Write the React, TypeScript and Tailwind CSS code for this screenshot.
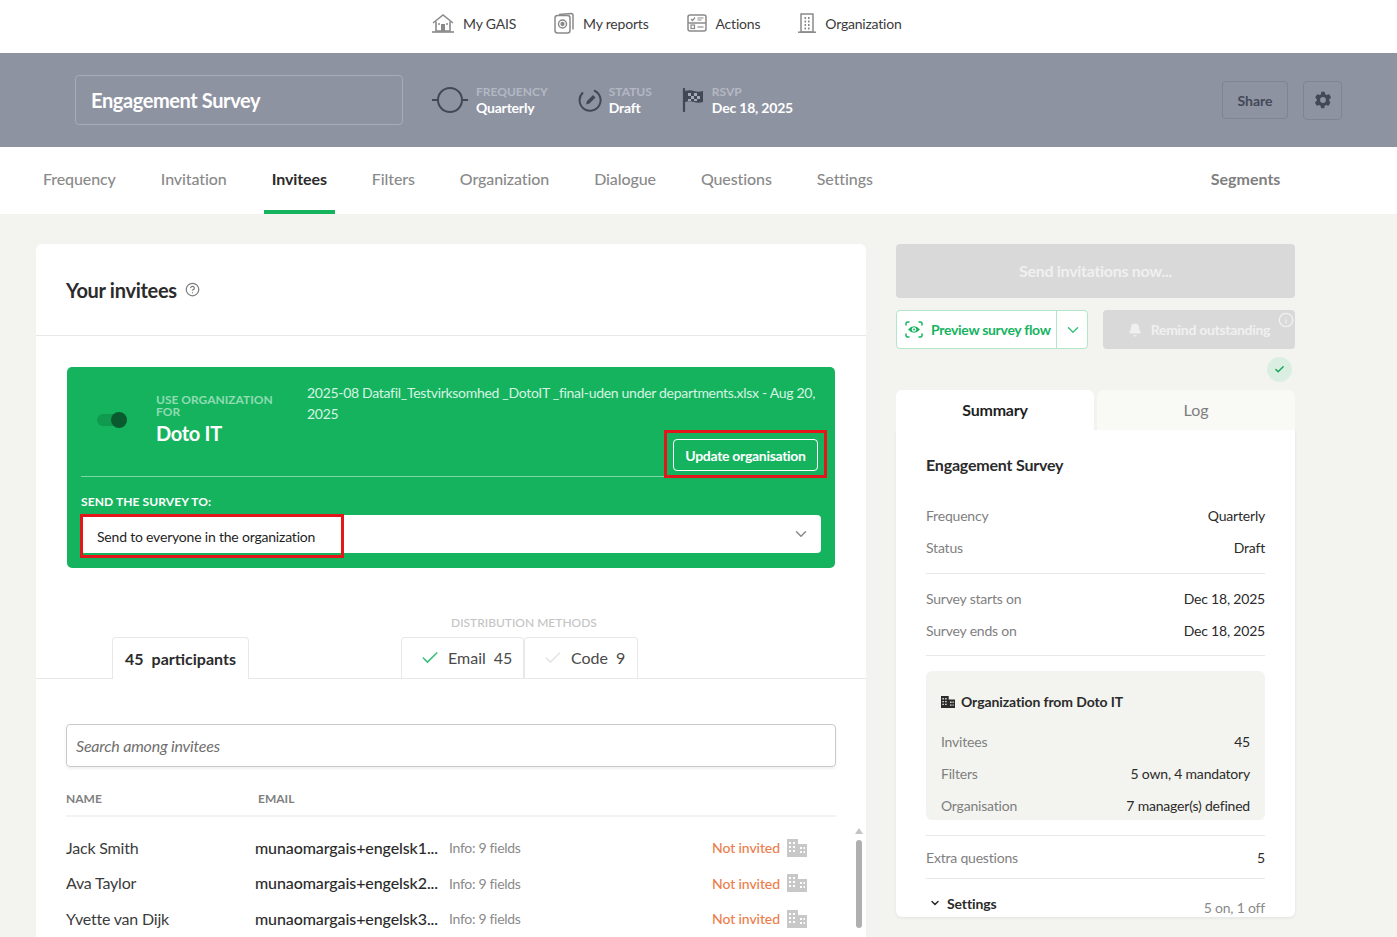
import { Bell, ChevronDown, Check, CircleHelp, Info } from "lucide-react";

const font = "font-['Lato','Liberation_Sans',sans-serif]";

// Icons drawn by hand, the packages have nothing close enough
const HomeIcon = () => (
  <svg width="22" height="20" viewBox="0 0 22 20" fill="none" stroke="#8a8a8a" strokeWidth="1.6">
    <path d="M1 10 11 2l10 8" />
    <path d="M4 8.5V18h14V8.5" />
    <rect x="9" y="11" width="4" height="7" fill="#8a8a8a" stroke="none" />
    <path d="M0 19h22" />
    <path d="M6 11h2M14 11h2" />
  </svg>
);

const ReportsIcon = () => (
  <svg width="20" height="22" viewBox="0 0 20 22" fill="none" stroke="#8a8a8a" strokeWidth="1.5">
    <path d="M5 2.5 17 1.5q2 0 2 2v14" />
    <rect x="1" y="3.5" width="15" height="17.5" rx="2.5" />
    <circle cx="8.5" cy="12" r="4" />
    <circle cx="8.5" cy="12" r="1.4" fill="#8a8a8a" />
  </svg>
);

const ActionsIcon = () => (
  <svg width="20" height="18" viewBox="0 0 20 18" fill="none" stroke="#8a8a8a" strokeWidth="1.5">
    <rect x="1" y="1" width="18" height="16" rx="2" />
    <path d="M1 9h18" />
    <path d="M4 5l1.5 1.5L8 3.5M10.5 4h6M10.5 6h4" strokeWidth="1.2" />
    <rect x="4" y="11" width="3.5" height="3.5" strokeWidth="1.2" />
    <path d="M10.5 13h6" strokeWidth="1.2" />
  </svg>
);

const OrgNavIcon = () => (
  <svg width="18" height="20" viewBox="0 0 18 20" fill="none" stroke="#8a8a8a" strokeWidth="1.5">
    <rect x="3" y="1" width="12" height="18" />
    <path d="M0 19.2h18" />
    <path d="M6.5 5h1.6M10 5h1.6M6.5 8.5h1.6M10 8.5h1.6M6.5 12h1.6M10 12h1.6M6.5 15.500h1.6M10 15.500h1.6" strokeWidth="1.8" />
  </svg>
);

const FrequencyIcon = () => (
  <svg width="36" height="28" viewBox="0 0 36 28" fill="none" stroke="#434857" strokeWidth="2">
    <circle cx="18" cy="14" r="12" />
    <path d="M0 14h6M30 14h6" />
  </svg>
);

const StatusIcon = () => (
  <svg width="24" height="24" viewBox="0 0 24 24" fill="none" stroke="#434857" strokeWidth="2">
    <path d="M16 2.500A10.500 10.500 0 1 1 5 4.500" />
    <path d="M8 16.500l1-3.500 6-6 2.500 2.500-6 6z" fill="#434857" stroke="none" />
  </svg>
);

const FlagIcon = () => (
  <svg width="22" height="24" viewBox="0 0 22 24">
    <path d="M2 1v22" stroke="#434857" strokeWidth="2.200" strokeLinecap="round" />
    <path d="M3 3q5-1.500 9 0t9 0v11q-5 1.500-9 0t-9 0z" fill="#434857" />
    <path d="M6 5h3v3H6zM12 5h3v3h-3zM9 8h3v3H9zM15 8h3v3h-3zM6 11h3v2H6zM12 11h3v2h-3z" fill="#a5a9b5" />
  </svg>
);

const GearIcon = () => (
  <svg width="20" height="20" viewBox="0 0 24 24" fill="#434857">
    <path d="M19.400 13c.1-.3.100-.7.100-1s0-.7-.1-1l2.100-1.600c.2-.2.300-.4.100-.7l-2-3.400c-.1-.2-.4-.3-.6-.2l-2.500 1c-.5-.4-1.100-.7-1.700-1L14 2.400c0-.2-.2-.4-.5-.4h-3c-.3 0-.5.200-.5.400l-.4 2.700c-.6.300-1.200.6-1.700 1l-2.500-1c-.2-.1-.5 0-.6.200l-2 3.400c-.1.300-.1.500.1.700L4.600 11c0 .3-.1.700-.1 1s0 .7.100 1l-2.100 1.600c-.2.200-.3.400-.1.700l2 3.400c.1.200.4.300.6.200l2.500-1c.5.4 1.100.7 1.700 1l.4 2.700c0 .2.200.4.500.4h3c.3 0 .5-.2.500-.4l.4-2.700c.6-.3 1.200-.6 1.700-1l2.500 1c.2.100.5 0 .6-.2l2-3.400c.1-.3.100-.5-.1-.7zM12 15.500a3.500 3.500 0 1 1 0-7 3.500 3.500 0 0 1 0 7z" />
  </svg>
);

const EyeIcon = () => (
  <svg width="18" height="17" viewBox="0 0 18 17" fill="none" stroke="#16b35f" strokeWidth="1.500">
    <path d="M1 4.500V2.500q0-1.500 1.500-1.500h2M13.500 1h2Q17 1 17 2.500v2M17 12.500v2q0 1.500-1.500 1.500h-2M4.500 16h-2Q1 16 1 14.500v-2" />
    <path d="M3 8.500Q9 2 15 8.500 9 15 3 8.500z" fill="#16b35f" stroke="none" />
    <circle cx="9" cy="8.500" r="2.200" fill="#fff" stroke="none" />
    <circle cx="9" cy="8.500" r="1" fill="#16b35f" stroke="none" />
  </svg>
);

const BuildingIcon = ({ color, size = 20 }: { color: string; size?: number }) => (
  <svg width={size} height={(size * 18) / 20} viewBox="0 0 20 18" fill={color}>
    <path fillRule="evenodd" d="M0 0h11v5h9v13H0zM2 3v2h2V3zm4 0v2h2V3zM2 7v2h2V7zm4 0v2h2V7zm7 1v2h2V8zm3.500 0v2h1.500V8zM2 11v2h2v-2zm4 0v2h2v-2zm7 1v2h2v-2zm3.500 0v2h1.500v-2z" />
  </svg>
);

const navItems = [
  { label: "My GAIS", icon: <HomeIcon /> },
  { label: "My reports", icon: <ReportsIcon /> },
  { label: "Actions", icon: <ActionsIcon /> },
  { label: "Organization", icon: <OrgNavIcon /> },
];

const tabs = ["Frequency", "Invitation", "Invitees", "Filters", "Organization", "Dialogue", "Questions", "Settings"];

const invitees = [
  { name: "Jack Smith", email: "munaomargais+engelsk1..." },
  { name: "Ava Taylor", email: "munaomargais+engelsk2..." },
  { name: "Yvette van Dijk", email: "munaomargais+engelsk3..." },
];

function HeaderStat({ icon, label, value, gap }: { icon: React.ReactNode; label: string; value: string; gap: string }) {
  return (
    <div className={`flex items-center ${gap}`}>
      {icon}
      <div className="leading-none">
        <div className="text-[12px] leading-[15px] font-bold text-[#b4b8c3]">{label}</div>
        <div className="text-[14px] leading-[18px] font-bold text-white tracking-[-0.2px]">{value}</div>
      </div>
    </div>
  );
}

function SummaryRow({ label, value, className = "" }: { label: string; value: string; className?: string }) {
  return (
    <div className={`flex justify-between text-[14px] ${className}`}>
      <span className="text-[#7f7f7f] tracking-[-0.2px]">{label}</span>
      <span className="text-[#2b2b2b] tracking-[-0.2px]">{value}</span>
    </div>
  );
}

export default function App() {
  return (
    <div className={`${font} h-[937px] w-[1397px] overflow-hidden bg-[#f3f4ef] text-[#2b2b2b]`}>
      {/* Top nav */}
      <div className="h-[53px] bg-white flex items-center pl-[432px] pb-[7px]">
        {navItems.map((item, i) => (
          <div key={item.label} className={`flex items-center gap-[9px] text-[14px] text-[#3c3c3c] tracking-[-0.2px] ${i < 3 ? "mr-[38px]" : ""}`}>
            {item.icon}
            <span>{item.label}</span>
          </div>
        ))}
      </div>

      {/* Survey header */}
      <div className="h-[94px] bg-[#8e93a2] flex items-center pl-[75px] pr-[55px]">
        <div className="w-[328px] h-[50px] rounded-[4px] border border-[#a8acb8] flex items-center px-[15px] text-[20px] font-bold text-white tracking-[-0.4px] mr-[29px]">
          Engagement Survey
        </div>
        <div className="flex items-center">
          <HeaderStat icon={<FrequencyIcon />} label="FREQUENCY" value="Quarterly" gap="gap-[8px]" />
          <div className="w-[30px]" />
          <HeaderStat icon={<StatusIcon />} label="STATUS" value="Draft" gap="gap-[7px]" />
          <div className="w-[30px]" />
          <HeaderStat icon={<FlagIcon />} label="RSVP" value="Dec 18, 2025" gap="gap-[8px]" />
        </div>
        <div className="ml-auto flex items-center gap-[15px]">
          <div className="w-[66px] h-[38px] rounded-[4px] border border-[#7f8493] flex items-center justify-center text-[14px] font-bold text-[#434857]">
            Share
          </div>
          <div className="w-[39px] h-[39px] rounded-[4px] border border-[#7f8493] flex items-center justify-center">
            <GearIcon />
          </div>
        </div>
      </div>

      {/* Tabs */}
      <div className="h-[67px] bg-white flex pl-[35px] text-[16px] text-[#8a8a8a]">
        {tabs.map((t) => (
          <div
            key={t}
            className={`px-[8px] mr-[29px] flex items-center border-b-[4px] tracking-[-0.1px] ${
              t === "Invitees" ? "border-[#16b35f] text-[#2b2b2b] font-bold" : "border-transparent font-medium"
            }`}
          >
            {t}
          </div>
        ))}
        <div className="ml-[301px] flex items-center pb-[4px] font-bold text-[#7f7f7f]">Segments</div>
      </div>

      <div className="flex pl-[36px] pt-[30px] gap-[30px] items-start">
        {/* Left card */}
        <div className="w-[830px] h-[700px] bg-white rounded-t-[6px] relative">
          <div className="h-[92px] border-b border-[#e8e8e8] flex items-center pl-[30px] gap-[8px]">
            <span className="text-[20px] font-bold tracking-[-0.3px] text-[#2b2b2b]">Your invitees</span>
            <CircleHelp size={15} color="#7f7f7f" />
          </div>

          <div className="mt-[31px] mx-[31px] w-[768px] h-[201px] bg-[#16b35f] rounded-[5px] px-[14px] flex flex-col">
            <div className="h-[110px] flex border-b border-[#7ed6a5]">
              <div className="w-[75px] flex pt-[46px] pl-[16px]">
                <div className="relative w-[30px] h-[12px] mt-[1px] rounded-full bg-[#0f9a50]">
                  <div className="absolute right-0 -top-[2px] w-[16px] h-[16px] rounded-full bg-[#0a5a30]" />
                </div>
              </div>
              <div className="w-[151px] pt-[27px]">
                <div className="text-[12px] leading-[12px] font-bold text-[#8fdcb2] w-[120px]">USE ORGANIZATION FOR</div>
                <div className="text-[20px] leading-[28px] mt-[1px] font-bold text-white tracking-[-0.3px]">Doto IT</div>
              </div>
              <div className="flex-1 pt-[15px] flex flex-col">
                <div className="text-[14px] leading-[21px] text-[#d5f3e2] tracking-[-0.3px] w-[510px]">
                  2025-08 Datafil_Testvirksomhed _DotoIT _final-uden under departments.xlsx - Aug 20, 2025
                </div>
                <div className="self-end mt-[6px] -mr-[6px] border-[3px] border-[#e3161c] p-[6px] h-[48px] w-[163px]">
                  <div className="h-[32px] rounded-[4px] border border-white flex items-center justify-center text-[14px] font-bold text-white tracking-[-0.3px] w-[145px] mx-auto">
                    Update organisation
                  </div>
                </div>
              </div>
            </div>
            <div className="text-[12px] leading-[15px] font-bold text-white mt-[17px] mb-[6px] tracking-[0.1px]">SEND THE SURVEY TO:</div>
            <div className="h-[38px] bg-white rounded-[4px] flex items-center relative">
              <div className="absolute -left-[1px] -top-[1px] w-[264px] h-[44px] border-[3px] border-[#e3161c] flex items-center pl-[14px] text-[14px] text-[#1f1f1f] tracking-[-0.2px]">
                Send to everyone in the organization
              </div>
              <ChevronDown size={18} color="#8a8a8a" className="ml-auto mr-[11px]" />
            </div>
          </div>

          <div className="mt-[47px] pl-[415px] text-[12px] leading-[15px] text-[#c4c4c4] font-medium">DISTRIBUTION METHODS</div>

          <div className="mt-[7px] h-[42px] border-b border-[#e8e8e8] flex items-end pl-[76px] text-[16px]">
            <div className="w-[137px] h-[42px] -mb-px rounded-t-[4px] border border-b-0 border-[#e8e8e8] bg-white flex items-center justify-center font-bold gap-[8px] text-[#2b2b2b]">
              <span>45</span>
              <span>participants</span>
            </div>
            <div className="ml-[152px] w-[123px] h-[41px] rounded-t-[4px] border border-b-0 border-[#e8e8e8] flex items-center pl-[18px] text-[#4a4a4a]">
              <Check size={20} color="#3dbf7f" className="mr-[8px]" />
              <span>Email</span>
              <span className="ml-[8px]">45</span>
            </div>
            <div className="w-[114px] h-[41px] rounded-t-[4px] border border-b-0 border-[#e8e8e8] flex items-center pl-[18px] text-[#4a4a4a]">
              <Check size={20} color="#e6e6e6" className="mr-[8px]" />
              <span>Code</span>
              <span className="ml-[8px]">9</span>
            </div>
          </div>

          <div className="mt-[45px] mx-[30px] h-[43px] rounded-[4px] border border-[#c9c9c9] shadow-[0_2px_3px_#f0f0f0] flex items-center pl-[9px] text-[16px] italic text-[#6f6f6f] tracking-[-0.2px]">
            Search among invitees
          </div>

          <div className="mt-[23px] mx-[30px] h-[27px] border-b-2 border-[#f3f3f0] flex text-[12px] font-bold text-[#7f7f7f]">
            <span className="w-[192px]">NAME</span>
            <span>EMAIL</span>
          </div>

          <div className="mt-[13px] mx-[30px]">
            {invitees.map((row) => (
              <div key={row.name} className="h-[35.500px] flex items-center">
                <span className="w-[189px] text-[16px] text-[#3c3c3c] tracking-[-0.2px]">{row.name}</span>
                <span className="w-[194px] text-[16px] font-medium text-[#2b2b2b] tracking-[-0.1px]">{row.email}</span>
                <span className="w-[263px] text-[14px] text-[#8a8a8a] tracking-[-0.3px]">Info: 9 fields</span>
                <span className="w-[75px] text-[14px] font-medium text-[#ec7d4b] tracking-[-0.1px]">Not invited</span>
                <BuildingIcon color="#c8c8c8" />
              </div>
            ))}
          </div>

          {/* Scrollbar */}
          <div className="absolute left-[819px] top-[584px] w-0 h-0 border-x-[4px] border-x-transparent border-b-[6px] border-b-[#c4c4c4]" />
          <div className="absolute left-[820px] top-[596px] w-[6px] h-[88px] rounded-full bg-[#b0b0b0]" />
        </div>

        {/* Right column */}
        <div className="w-[399px]">
          <div className="h-[54px] rounded-[4px] bg-[#d9d9d9] flex items-center justify-center text-[16px] font-bold text-[#f0f0f0] tracking-[-0.3px]">
            Send invitations now...
          </div>

          <div className="mt-[12px] flex justify-between">
            <div className="w-[192px] h-[39px] rounded-[4px] border border-[#b3e6c8] bg-white flex items-center">
              <div className="w-[160px] h-full border-r border-[#b3e6c8] flex items-center pl-[8px] gap-[8px] text-[14px] font-bold text-[#16b35f] tracking-[-0.3px]">
                <EyeIcon />
                Preview survey flow
              </div>
              <ChevronDown size={18} color="#3dbf7f" className="ml-[7px]" />
            </div>
            <div className="relative w-[192px] h-[39px] rounded-[4px] bg-[#d9d9d9] flex items-center justify-center gap-[9px] text-[14px] font-bold text-[#f0f0f0] tracking-[-0.3px]">
              <Bell size={14} color="#f0f0f0" fill="#f0f0f0" />
              Remind outstanding
              <Info size={16} color="#f0f0f0" className="absolute right-[1px] top-[2px]" />
            </div>
          </div>

          <div className="h-[41px] flex items-center justify-end pr-[3px]">
            <div className="w-[25px] h-[25px] rounded-full bg-[#dbeee2] flex items-center justify-center">
              <Check size={11} color="#16a35a" strokeWidth={3} />
            </div>
          </div>

          <div className="flex h-[40px]">
            <div className="w-[198px] bg-white rounded-t-[6px] flex items-center justify-center text-[16px] font-bold text-[#1f1f1f] tracking-[-0.2px]">
              Summary
            </div>
            <div className="ml-[3px] flex-1 bg-[#f9f9f6] rounded-t-[6px] flex items-center justify-center text-[16px] text-[#7f7f7f]">
              Log
            </div>
          </div>

          <div className="bg-white rounded-b-[6px] shadow-[0_1px_3px_#e2e2e2] px-[30px] h-[487px]">
            <div className="pt-[25px] text-[16px] leading-[20px] font-bold text-[#2b2b2b] tracking-[-0.2px]">Engagement Survey</div>
            <div className="mt-[30px] flex flex-col gap-[11px] pb-[15px] border-b border-[#e8e8e8]">
              <SummaryRow label="Frequency" value="Quarterly" />
              <SummaryRow label="Status" value="Draft" />
            </div>
            <div className="mt-[14px] flex flex-col gap-[11px] pb-[14px] border-b border-[#e8e8e8]">
              <SummaryRow label="Survey starts on" value="Dec 18, 2025" />
              <SummaryRow label="Survey ends on" value="Dec 18, 2025" />
            </div>
            <div className="mt-[15px] h-[149px] rounded-[6px] bg-[#f3f4ef] px-[15px] pt-[22px]">
              <div className="flex items-center gap-[6px] text-[14px] leading-[18px] font-bold text-[#2b2b2b] tracking-[-0.1px]">
                <BuildingIcon color="#2b2b2b" size={14} />
                Organization from Doto IT
              </div>
              <div className="mt-[20px] flex flex-col gap-[11px]">
                <SummaryRow label="Invitees" value="45" />
                <SummaryRow label="Filters" value="5 own, 4 mandatory" />
                <SummaryRow label="Organisation" value="7 manager(s) defined" />
              </div>
            </div>
            <div className="mt-[15px] h-[44px] border-y border-[#e8e8e8] flex items-center">
              <SummaryRow label="Extra questions" value="5" className="w-full" />
            </div>
            <div className="flex justify-between pt-[14px]">
              <div className="flex items-center gap-[6px] h-[20px] text-[14px] font-bold text-[#2b2b2b] tracking-[-0.1px]">
                <ChevronDown size={12} color="#2b2b2b" strokeWidth={3} className="ml-[3px]" />
                Settings
              </div>
              <span className="text-[14px] text-[#8a8a8a] mt-[4px] tracking-[-0.2px]">5 on, 1 off</span>
            </div>
          </div>
        </div>
      </div>
    </div>
  );
}
